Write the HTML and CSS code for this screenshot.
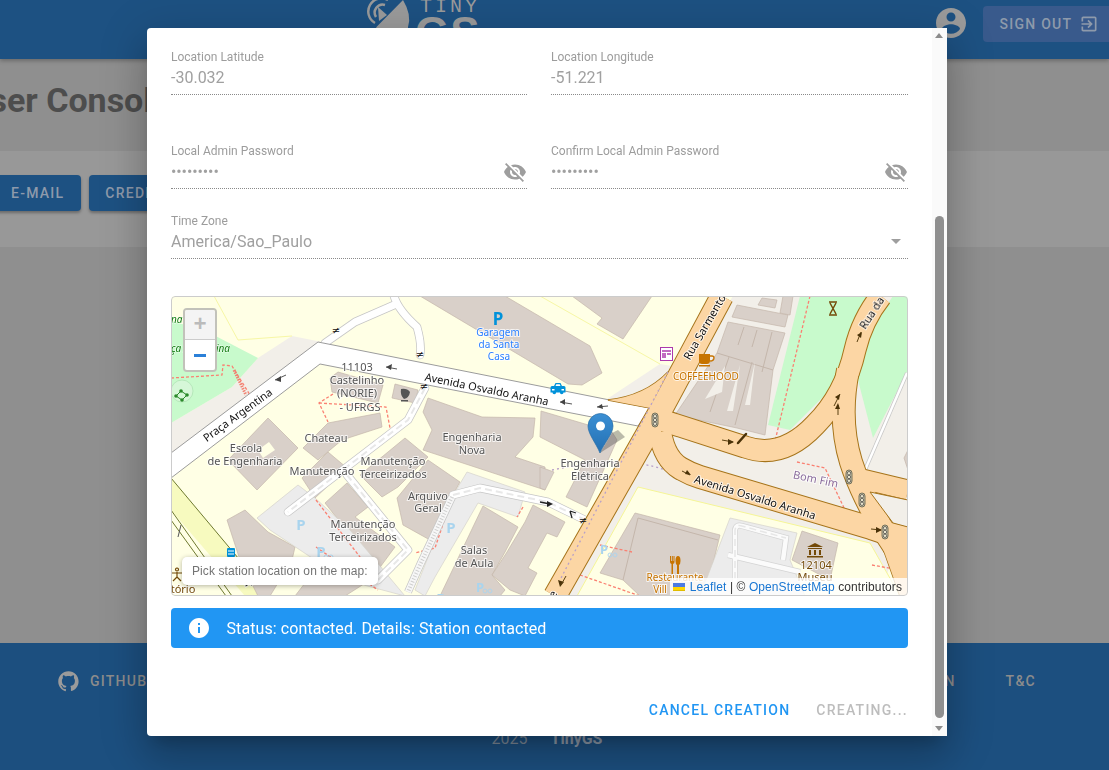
FILE: index.html
```html
<!DOCTYPE html>
<html lang="en">
<head>
<meta charset="utf-8">
<title>TinyGS User Console</title>
<link rel="stylesheet" href="styles.css">
</head>
<body>
<div class="page">
  <header class="topbar">
    <div class="logo">
      <svg class="logo-dish" viewBox="0 0 46 34" width="46" height="34">
        <path class="dish-fill" d="M10.700 28.700 L37 2 Q46 17 42 29 L42 34 L8 34 Z"/>
        <path class="dish-fill" d="M12 9 L21 17 L13 23 Z"/>
        <path class="dish-arc" d="M9 25 A13 13 0 0 1 22 2"/>
        <path class="dish-arc" d="M10 19 A8 8 0 0 1 19 7"/>
      </svg>
      <div class="logo-text">
        <span class="logo-tiny">TINY</span>
        <span class="logo-gs">GS</span>
      </div>
    </div>
    <svg class="account" viewBox="0 0 24 24" width="36" height="36"><path d="M12 2C6.48 2 2 6.48 2 12s4.48 10 10 10 10-4.48 10-10S17.52 2 12 2zm0 3c1.66 0 3 1.34 3 3s-1.34 3-3 3-3-1.34-3-3 1.34-3 3-3zm0 14.2c-2.5 0-4.71-1.28-6-3.22.03-1.99 4-3.08 6-3.08 1.99 0 5.97 1.09 6 3.08-1.29 1.94-3.5 3.22-6 3.22z"/></svg>
    <div class="signout">
      <span>SIGN OUT</span>
      <svg viewBox="0 0 24 24" width="20" height="20"><path d="M10.09 15.59 11.5 17l5-5-5-5-1.41 1.41L12.67 11H3v2h9.67l-2.58 2.59zM19 3H5c-1.11 0-2 .9-2 2v4h2V5h14v14H5v-4H3v4c0 1.1.89 2 2 2h14c1.1 0 2-.9 2-2V5c0-1.1-.9-2-2-2z"/></svg>
    </div>
  </header>
  <main class="console">
    <h1 class="console-title">User Console</h1>
    <div class="console-strip">
      <div class="console-btn console-btn-first">E-MAIL</div>
      <div class="console-btn">CREDENTIALS</div>
    </div>
  </main>
  <footer class="footer">
    <div class="footer-links">
      <svg class="github" viewBox="0 0 24 24" width="23" height="23"><path d="M12 1.3C6.1 1.3 1.3 6.1 1.3 12c0 4.7 3.1 8.7 7.3 10.1.5.1.7-.2.7-.5v-1.9c-3 .6-3.6-1.4-3.6-1.4-.5-1.2-1.2-1.6-1.2-1.6-1-.7.1-.7.1-.7 1.1.1 1.6 1.1 1.6 1.1 1 1.6 2.5 1.2 3.1.9.1-.7.4-1.2.7-1.4-2.4-.3-4.9-1.2-4.9-5.3 0-1.2.4-2.1 1.1-2.9-.1-.3-.5-1.4.1-2.8 0 0 .9-.3 2.9 1.1.9-.2 1.8-.4 2.7-.4.9 0 1.8.1 2.7.4 2-1.4 2.9-1.1 2.9-1.1.6 1.5.2 2.5.1 2.8.7.7 1.1 1.7 1.1 2.9 0 4.1-2.5 5-4.9 5.3.4.3.7 1 .7 2v2.9c0 .3.2.6.7.5 4.2-1.4 7.3-5.4 7.3-10.1C22.7 6.1 17.9 1.3 12 1.3z"/></svg>
      <span class="footer-link">GITHUB</span>
      <span class="footer-link footer-link-push">DOCUMENTATION</span>
      <span class="footer-link footer-link-last">T&amp;C</span>
    </div>
    <div class="footer-copy"><span>2025</span><b>TinyGS</b></div>
  </footer>
</div>

<section class="dialog">
  <div class="dialog-body">
    <div class="grid-2 row-a">
      <div class="field"><div class="field-label">Location Latitude</div><div class="field-value">-30.032</div></div>
      <div class="field"><div class="field-label">Location Longitude</div><div class="field-value">-51.221</div></div>
    </div>
    <div class="grid-2 row-b">
      <div class="field">
        <div class="field-label">Local Admin Password</div>
        <div class="field-value field-pass">•••••••••<svg class="eye" viewBox="0 0 24 24" width="24" height="24"><path d="M12 7c2.76 0 5 2.24 5 5 0 .65-.13 1.26-.36 1.83l2.92 2.92c1.51-1.26 2.7-2.89 3.43-4.75-1.73-4.39-6-7.5-11-7.5-1.4 0-2.74.25-3.98.7l2.16 2.16C10.74 7.13 11.35 7 12 7zM2 4.27l2.28 2.28.46.46C3.08 8.3 1.78 10.02 1 12c1.73 4.39 6 7.5 11 7.5 1.55 0 3.03-.3 4.38-.84l.42.42L19.73 22 21 20.73 3.27 3 2 4.27zM7.53 9.8l1.55 1.55c-.05.21-.08.43-.08.65 0 1.66 1.34 3 3 3 .22 0 .44-.03.65-.08l1.55 1.55c-.67.33-1.41.53-2.2.53-2.76 0-5-2.24-5-5 0-.79.2-1.53.53-2.2zm4.31-.78l3.15 3.15.02-.16c0-1.66-1.34-3-3-3l-.17.01z"/></svg></div>
      </div>
      <div class="field">
        <div class="field-label">Confirm Local Admin Password</div>
        <div class="field-value field-pass">•••••••••<svg class="eye" viewBox="0 0 24 24" width="24" height="24"><path d="M12 7c2.76 0 5 2.24 5 5 0 .65-.13 1.26-.36 1.83l2.92 2.92c1.51-1.26 2.7-2.89 3.43-4.75-1.73-4.39-6-7.5-11-7.5-1.4 0-2.74.25-3.98.7l2.16 2.16C10.74 7.13 11.35 7 12 7zM2 4.27l2.28 2.28.46.46C3.08 8.3 1.78 10.02 1 12c1.73 4.39 6 7.5 11 7.5 1.55 0 3.03-.3 4.38-.84l.42.42L19.73 22 21 20.73 3.27 3 2 4.27zM7.53 9.8l1.55 1.55c-.05.21-.08.43-.08.65 0 1.66 1.34 3 3 3 .22 0 .44-.03.65-.08l1.55 1.55c-.67.33-1.41.53-2.2.53-2.76 0-5-2.24-5-5 0-.79.2-1.53.53-2.2zm4.31-.78l3.15 3.15.02-.16c0-1.66-1.34-3-3-3l-.17.01z"/></svg></div>
      </div>
    </div>
    <div class="field row-c">
      <div class="field-label">Time Zone</div>
      <div class="field-value field-select">America/Sao_Paulo<svg class="caret" viewBox="0 0 24 24" width="24" height="24"><path d="M7 10l5 5 5-5z"/></svg></div>
    </div>

    <div class="map">
      <svg class="map-canvas" viewBox="171 296 737 300" width="737" height="300" preserveAspectRatio="none">
        <defs>
          <linearGradient id="pinGrad" x1="0" y1="0" x2="0" y2="1"><stop offset="0" stop-color="#3b8fd4"/><stop offset="1" stop-color="#2470b2"/></linearGradient>
          <g id="tl"><rect class="tl-box" x="-3" y="-7" width="6" height="14" rx="3"/><circle class="tl-dot" cy="-3.800" r="1.700"/><circle class="tl-dot" r="1.700"/><circle class="tl-dot" cy="3.800" r="1.700"/></g>
        </defs>
        <rect class="m-uni" x="171" y="296" width="737" height="300"/>

        <!-- land -->
        <polygon class="m-land" points="171,423 232,387 258,358 292,336 322,342 171,458"/>
        <polygon class="m-land" points="733,296 908,296 908,510 880,596 560,596 640,440 660,410"/>
        <polygon class="m-land" points="607,399 660,364 672,366 652,402"/>
        <polyline class="m-uniline" points="214,296 238,340 292,336"/>
        <polyline class="m-uniline" points="540,296 660,364"/>
        <polygon class="m-green" points="171,321 204,330 258,358 232,387 171,423"/>
        <circle class="m-greenc" cx="182" cy="391" r="11"/>
        <polygon class="m-green" points="800,296 868,296 833,387 790,430 768,425"/>
        <polygon class="m-green" points="893,296 908,296 908,370 873,438 852,357"/>
        <polygon class="m-uni m-border" points="638,487 870,543 900,596 577,596"/>
        <polygon class="m-strip" points="171,478 270,596 245,596 171,510"/>
        <path class="m-rail" d="M171 478 L270 596 M171 510 L232 596 M171 520 L226 596"/>

        <!-- buildings -->
        <g class="m-bld">
          <polygon points="420,296 505,296 590,346 602,373 582,385 568,384"/>
          <polygon points="572,296 652,296 623,339 597,324 602,318"/>
          <polygon points="330,378 338,372 383,385 378,403 332,392"/>
          <polygon points="328,423 380,413 382,427 342,440 318,460 303,448"/>
          <polygon points="395,384 418,390 415,403 392,398"/>
          <polygon points="268,418 298,448 257,490 228,460"/>
          <polygon points="302,478 328,452 347,468 315,498"/>
          <polygon points="405,438 428,457 398,487 382,497 360,475"/>
          <polygon points="428,460 460,482 450,500 430,540 403,525 397,498"/>
          <polygon points="347,483 368,507 355,517 395,547 378,570 325,503"/>
          <polygon points="423,412 428,398 482,417 535,418 533,437 515,457 545,467 545,490 423,450 432,430"/>
          <polygon points="541,411 612,432 617,440 587,507 566,497 585,460 540,437"/>
          <polygon points="540,467 554,472 545,490 540,488"/>
          <polygon points="483,506 518,527 505,552 492,575 505,590 500,596 440,596"/>
          <polygon points="533,505 565,522 557,537 547,533 528,568 537,573 525,596 510,590 492,575 507,552 525,522"/>
          <polygon points="227,520 245,510 268,532 295,547 292,560 270,596 258,596 240,560"/>
          <polygon points="325,557 362,550 378,575 345,596 295,596"/>
          <polygon points="635,513 720,535 705,596 640,596 623,580 600,573"/>
          <polygon points="802,531 838,543 830,580 792,560"/>
          <polygon points="728,322 785,333 773,370 765,435 737,428 675,415 717,353"/>
          <polygon points="732,317 737,305 788,315 785,327"/>
          <polygon points="758,305 762,298 777,300 775,308"/>
          <polygon points="780,313 783,296 793,296 790,315"/>
          <polygon points="904,458 908,450 908,470"/>
        </g>
        <polygon class="m-uni" points="269,442 275,450 263,458 258,450"/>
        <path class="m-bldline" d="M638 518 L718 540 M638 518 L623 580 M744 327 L738 345 M757 330 L752 347 M772 332 L762 372 M717 353 L773 370 M729 357 L710 412 M752 362 L735 425"/>
        <polygon class="m-land" points="705,399 725,366 722,392"/>
        <polygon class="m-land" points="727,411 740,365 733,411"/>
        <polygon class="m-land" points="745,405 755,362 750,405"/>

        <!-- parking surfaces -->
        <g class="m-park">
          <polygon points="257,518 298,485 315,498 350,530 375,560 405,596 345,580 270,530"/>
          <polygon points="467,472 525,492 518,517 478,503 435,577 425,596 415,590 452,497"/>
          <polygon points="730,518 797,533 790,560 805,596 700,596"/>
        </g>
        <path class="m-lot-case" d="M735 590 L735 530 Q736 524 742 526 L786 538 L783 560 M728 555 L800 572"/>
        <path class="m-lot" d="M735 590 L735 530 Q736 524 742 526 L786 538 L783 560 M728 555 L800 572"/>
        <path class="m-lot-dash" d="M735 590 L735 530 Q736 524 742 526 L786 538"/>

        <!-- footways -->
        <path class="m-foot" d="M171 378 L222 375 L223 365 L232 366 L250 395"/>
        <path class="m-foot-strong" d="M234 370 L246 395"/>
        <path class="m-foot" d="M333 394 L319 403 L328 422 M319 403 L386 407 L390 428 M316 547 L378 590 M316 500 L370 570 M452 497 L435 548 L415 553 M523 507 L517 517 M600 545 L632 552 M580 575 L640 596 M810 296 L775 441 M797 462 L825 468 L845 510 M872 565 L900 570"/>
        <path class="m-foot-p" d="M552 470 Q625 455 665 470 L908 530 M660 465 L760 490"/>

        <!-- service roads -->
        <path class="m-case m-s" d="M394 296 Q398 310 417 327 Q422 345 420 355 M325 343 L355 322 L394 305 M425 388 L408 420 L288 512 M347 475 L408 550 L378 580 M453 495 L480 488 L548 502 L585 520"/>
        <path class="m-white m-s2" d="M394 296 Q398 310 417 327 Q422 345 420 355 M325 343 L355 322 L394 305 M425 388 L408 420 L288 512 M347 475 L408 550 L378 580 M453 495 L480 488 L548 502 L585 520"/>
        <path class="m-dash" d="M425 388 L408 420 L288 512 M347 475 L408 550 L378 580 M453 495 L480 488 L548 502 L585 520"/>
        <path class="m-case m-footway" d="M452 497 L420 565 L408 592"/>
        <path class="m-footway-w" d="M452 497 L420 565 L408 592"/>
        <path class="m-footway-d" d="M452 497 L420 565 L408 592"/>
        <path class="m-white-case" d="M907 373 L865 470"/>
        <path class="m-white-thin" d="M907 373 L865 470"/>

        <!-- white avenue -->
        <polygon class="m-ave" points="171,453 318,342 650,408 638,426 320,364 171,478"/>

        <!-- primary roads casing then fill -->
        <g class="m-road-case">
          <path class="w23" d="M722 296 L662 408 L555 596"/>
          <path class="w22" d="M655 418 L745 447 Q782 460 815 425 Q845 395 855 350 Q862 320 881 296"/>
          <path class="w23" d="M848 370 Q838 420 851 462 Q860 490 880 525 L895 548"/>
          <path class="w20" d="M858 478 L908 490"/>
          <path class="w23" d="M660 432 Q664 458 680 468 Q690 474 700 477 L871 528 L895 536"/>
          <path class="m-wedge" d="M608 400 Q645 396 668 372 L650 408 Z"/>
          <path class="m-wedge" d="M893 523 L908 527 L908 596 L900 596 L880 540 Z"/>
        </g>
        <g class="m-road">
          <path class="w23" d="M722 296 L662 408 L555 596"/>
          <path class="w22" d="M655 418 L745 447 Q782 460 815 425 Q845 395 855 350 Q862 320 881 296"/>
          <path class="w23" d="M848 370 Q838 420 851 462 Q860 490 880 525 L895 548"/>
          <path class="w20" d="M858 478 L908 490"/>
          <path class="w23" d="M660 432 Q664 458 680 468 Q690 474 700 477 L871 528 L895 536"/>
          <path class="m-wedge-f" d="M608 400 Q645 396 668 372 L650 408 Z"/>
          <path class="m-wedge-f" d="M893 523 L908 527 L908 596 L900 596 L880 540 Z"/>
        </g>
        <polygon class="m-tri" points="870,492 893,523 908,527 908,500"/>
        <path class="m-foot-p" d="M668 372 L560 580"/>

        <!-- one-way arrows -->
        <g class="m-arrow">
          <path d="M275 380 L286 375"/><path d="M386 367 L397 369"/><path d="M560 402 L572 404"/>
          <path d="M597 407 L608 406"/><path d="M181 525 L178 537"/>
        </g>
        <g class="m-arrow-head">
          <path d="M275 380 l6 -4 l0 6z"/><path d="M386 367 l6 -3 l-1 6z"/><path d="M560 402 l5 -3 l0 6z"/>
          <path d="M597 407 l5 -3 l1 5z"/>
        </g>
        <g class="m-oneway-b">
          <path class="m-a2" d="M722 440 L733 442"/><path class="m-h2" d="M734 442 l-6 -3 l0 6z"/>
          <path class="m-a2" d="M834 406 L840 394"/><path class="m-h2" d="M840 394 l-5 3 l4 3z"/>
          <path class="m-a2" d="M838 415 L838 405"/><path class="m-h2" d="M838 403 l-3 6 l5 0z"/>
          <path class="m-a2" d="M857 342 L861 332"/><path class="m-h2" d="M862 332 l-5 3 l4 3z"/>
          <path class="m-a2" d="M682 471 L690 475"/><path class="m-h2" d="M691 475 l-6 -1 l2 -4z"/>
          <path class="m-a2" d="M871 529 L881 530"/><path class="m-h2" d="M882 530 l-6 -3 l0 6z"/>
          <path class="m-h2" d="M560 587 l-2 -7 l6 2z"/><path class="m-a2" d="M561 585 L566 576"/>
          <path class="m-a3" d="M738 443 L746 434"/>
        </g>
        <path class="m-black-thin" d="M540 502 L550 504 M570 511 L572 518 M570 511 L576 513"/>
        <path class="m-h3" d="M553 504 l-6 -3 l0 6z"/>
        <g class="m-ne">
          <text x="336" y="334">≠</text><text x="420" y="358">≠</text><text x="424" y="390">≠</text><text x="583" y="524">≠</text>
        </g>

        <!-- traffic lights -->
        <use href="#tl" x="655" y="420"/>
        <use href="#tl" x="849" y="477"/>
        <use href="#tl" x="862" y="500"/>
        <use href="#tl" x="885" y="532"/>

        <!-- point icons -->
        <path class="m-hour" d="M829 302 h8 M829 315 h8 M830 303 L836 314 M836 303 L830 314"/>
        <g class="m-news"><rect x="660.500" y="347.500" width="12" height="13"/><path d="M662 350 h9 v2 h-9z M662 353 h4 v5 h-4z M667 353 h4 v2 h-4z"/></g>
        <path class="m-cafe-f" d="M699 354 h11 v7 q0 3 -3 3 h-5 q-3 0 -3 -3z M699 365 h11 v1.500 h-11z"/>
        <path class="m-cafe-s" d="M710 356 h2 q2 0 2 2 q0 3 -4 3"/>
        <path class="m-taxi" d="M554 386 l1.500 -3 h5 l1.500 3 h2 q1.500 0 1.500 1.500 v5 h-2 a1.800 1.800 0 0 1 -3.600 0 h-3.800 a1.800 1.800 0 0 1 -3.600 0 h-2 v-5 q0 -1.500 1.500 -1.500z"/>
        <path class="m-taxi-w" d="M555.500 386 l.8 -1.800 h3.400 l.8 1.800z M552 389 h2.500 v1.500 h-2.500z M561.500 389 h2.500 v1.500 h-2.500z"/>
        <path class="m-rest" d="M670 556 v6 q0 1.500 1.500 2 v10 h1.500 v-10 q1.500 -.5 1.500 -2 v-6 h-1 v5 h-.7 v-5 h-1 v5 h-.8 v-5z M677 574 v-9 q-1.500 -1 -1.500 -4 q0 -5 2.500 -5 q2.500 0 2.500 5 q0 3 -1.500 4 v9z"/>
        <path class="m-museum" d="M815 543 L823 547 L807 547 Z M808 548 h14 v1 h-14z M809 550 h2 v5 h-2z M814 550 h2 v5 h-2z M819 550 h2 v5 h-2z M807 556 h16 v1.500 h-16z"/>
        <path class="m-dishico" d="M401 389 q6 -1 9 3 q-1 6 -6 7 q-4 -4 -3 -10z M401 400 h7 v1.500 h-7z"/>
        <g class="m-tree"><circle cx="176" cy="396" r="1.800"/><circle cx="181" cy="391" r="1.800"/><circle cx="187" cy="395" r="1.800"/><circle cx="182" cy="400" r="1.800"/><path d="M176 396 L181 391 L187 395 L182 400Z" class="m-tree-l"/></g>
        <rect class="m-bus" x="227" y="548" width="8" height="9" rx="1"/>
        <path class="m-bus-l" d="M228 551 h6 M228 554 h6"/>
        <path class="m-peep" d="M177 568 a1.500 1.500 0 1 0 .01 0z M172 573 h10 M177 572 v5 M177 577 l-4 4 M177 577 l4 4"/>
        <g class="m-bike"><circle cx="610" cy="555" r="2"/><circle cx="615" cy="555" r="2"/><circle cx="485" cy="591" r="2"/><circle cx="490" cy="591" r="2"/><circle cx="326" cy="557" r="2"/><circle cx="331" cy="557" r="2"/></g>

        <!-- labels -->
        <g class="m-t">
          <text x="357" y="371">11103</text><text x="357" y="384">Castelinho</text><text x="357" y="397">(NORIE)</text><text x="360" y="411">- UFRGS</text>
          <text x="326" y="442">Chateau</text><text x="246" y="452">Escola</text><text x="245" y="465">de Engenharia</text>
          <text x="322" y="475">Manutenção</text><text x="393" y="465">Manutenção</text><text x="393" y="478">Terceirizados</text>
          <text x="472" y="441">Engenharia</text><text x="472" y="454">Nova</text><text x="428" y="500">Arquivo</text><text x="428" y="512">Geral</text>
          <text x="363" y="528">Manutenção</text><text x="363" y="541">Terceirizados</text><text x="474" y="554">Salas</text><text x="474" y="567">de Aula</text>
          <text x="590" y="467">Engenharia</text><text x="590" y="480">Elétrica</text>
        </g>
        <g class="m-park-lbl">
          <text x="301" y="530">P</text><text x="451" y="533">P</text><text x="321" y="557">P</text>
          <text x="604" y="554" class="m-park-sm">P</text><text x="480" y="592" class="m-park-sm">P</text><text x="441" y="604">P</text>
        </g>
        <text class="m-parkbig" x="498" y="325">P</text>
        <g class="m-blue"><text x="498" y="336">Garagem</text><text x="499" y="348">da Santa</text><text x="499" y="360">Casa</text></g>
        <text class="m-coffee" x="706" y="380">COFFEEHOOD</text>
        <g class="m-brown"><text x="816" y="569">12104</text><text x="815" y="581">Museu</text><text x="183" y="593">tório</text></g>
        <g class="m-coffee"><text x="675" y="581">Restaurante</text><text x="660" y="593">Vill</text></g>
        <text class="m-purple" transform="translate(815 483) rotate(12)">Bom Fim</text>
        <g class="m-road-t">
          <text transform="translate(486 393) rotate(11.500)">Avenida Osvaldo Aranha</text>
          <text transform="translate(754 501) rotate(17)">Avenida Osvaldo Aranha</text>
          <text transform="translate(240 418) rotate(-36)">Praça Argentina</text>
          <text transform="translate(708 329) rotate(-60)">Rua Sarmento</text>
          <text transform="translate(875 315) rotate(-57)">Rua da</text>
          <text transform="translate(244 584) rotate(55)">dr</text>
          <text transform="translate(556 596) rotate(-60)">e</text>
        </g>
        <g class="m-parkname"><text x="171" y="323">na</text><text x="171" y="352">ça A</text><text x="216" y="352">ina</text></g>

        <!-- marker -->
        <path class="m-shadow" d="M600 453 L612 433 L618 430 L625 437 Z"/>
        <path class="m-pin" d="M600 453 C596 443 588 434 588 426 A12.500 12.500 0 0 1 613 426 C613 434 604 443 600 453 Z"/>
        <circle class="m-pin-dot" cx="600.500" cy="426" r="4.500"/>
      </svg>

      <div class="zoom">
        <div class="zoom-btn zoom-in">+</div>
        <div class="zoom-btn zoom-out"><i></i></div>
      </div>
      <div class="pick">Pick station location on the map:</div>
      <div class="attrib">
        <svg class="flag" viewBox="0 0 12 8" width="12" height="8"><rect width="12" height="4" fill="#4C7BE1"/><rect y="4" width="12" height="3" fill="#FFD500"/><rect y="7" width="12" height="1" fill="#E0BC00"/></svg>
        <a>Leaflet</a> <span class="sep">|</span> © <a>OpenStreetMap</a> contributors
      </div>
    </div>

    <div class="alert">
      <svg viewBox="0 0 24 24" width="24" height="24"><path d="M12 2C6.48 2 2 6.48 2 12s4.48 10 10 10 10-4.48 10-10S17.52 2 12 2zm1 15h-2v-6h2v6zm0-8h-2V7h2v2z"/></svg>
      <span>Status: contacted. Details: Station contacted</span>
    </div>

    <div class="actions">
      <span class="action action-cancel">CANCEL CREATION</span>
      <span class="action action-off">CREATING...</span>
    </div>
  </div>

  <div class="scrollbar">
    <i class="scroll-up"></i>
    <i class="scroll-thumb"></i>
    <i class="scroll-down"></i>
  </div>
</section>
</body>
</html>
```
FILE: styles.css
```css
* { box-sizing: border-box; }
html, body { margin: 0; height: 100%; overflow: hidden; }
body { font-family: Roboto, "Liberation Sans", sans-serif; background: #8f8f8f; }

.page { width: 1109px; height: 770px; display: flex; flex-direction: column; overflow: hidden; }

/* background page, already dimmed as under a modal backdrop */
.topbar { height: 59px; flex: none; background: #1d5182; box-shadow: 0 2px 4px rgba(0,0,0,.25); display: flex; align-items: flex-start; position: relative; overflow: hidden; }
.logo { display: flex; margin-left: 366px; height: 59px; }
.logo-dish { margin-top: -2px; flex: none; }
.dish-fill { fill: #9b9b9b; }
.dish-arc { fill: none; stroke: #9b9b9b; stroke-width: 2.500; }
.logo-text { margin-left: 3px; display: flex; flex-direction: column; }
.logo-tiny { font: 400 20px/1 "Liberation Mono", monospace; color: #9b9b9b; letter-spacing: 3px; margin-top: -3px; margin-left: 5px; }
.logo-gs { font: 700 44px/1 "Liberation Sans", sans-serif; color: #9b9b9b; margin-top: -6px; letter-spacing: 1px; }
.account { fill: #9b9b9b; margin-left: 452px; margin-top: 5px; flex: none; }
.signout { margin-left: 14px; margin-top: 6px; width: 150px; height: 36px; flex: none; background: #395a8c; border-radius: 4px; color: #8e9aab; font-size: 14px; font-weight: 500; letter-spacing: 1.250px; display: flex; align-items: center; padding-left: 17px; gap: 7px; }
.signout svg { fill: #8e9aab; }

.console { flex: 1; background: #8f8f8f; min-height: 0; }
.console-title { margin: 19px 0 0 -33px; font-size: 34px; line-height: 44px; font-weight: 700; color: #4d4d4d; white-space: nowrap; }
.console-strip { margin-top: 29px; height: 96px; background: #989898; display: flex; gap: 8px; padding-top: 24px; }
.console-btn { height: 36px; padding: 0 16px; display: flex; align-items: center; background: #1d5182; border-radius: 4px; color: #8e9aab; font-size: 14px; font-weight: 500; letter-spacing: 1.250px; box-shadow: 0 2px 3px rgba(0,0,0,.3); }
.console-btn-first { margin-left: -6px; padding-left: 17px; padding-right: 17px; }

.footer { height: 127px; flex: none; background: #1c4f7f; }
.footer-links { display: flex; align-items: center; height: 24px; margin-top: 26px; padding-left: 57px; font-size: 14px; font-weight: 500; letter-spacing: 1.250px; }
.github { fill: #9b9b9b; flex: none; }
.footer-link { margin-left: 10px; color: #8c8c8c; }
.footer-link-push { margin-left: auto; }
.footer-link-last { margin-left: 50px; margin-right: 73px; }
.footer-copy { margin-top: 34px; margin-left: -15px; display: flex; justify-content: center; gap: 23px; font-size: 16px; line-height: 24px; color: #7d8a99; }
.footer-copy b { color: #8c98a8; }

/* dialog */
.dialog { position: fixed; left: 147px; top: 28px; width: 800px; height: 708px; background: #fff; border-radius: 4px 0 0 4px; box-shadow: 0 11px 15px -7px rgba(0,0,0,.2), 0 24px 38px 3px rgba(0,0,0,.14), 0 9px 46px 8px rgba(0,0,0,.12); overflow: hidden; }
.dialog-body { padding: 19px 39px 8px 24px; height: 100%; display: flex; flex-direction: column; }

.grid-2 { display: grid; grid-template-columns: 356px 357px; column-gap: 24px; }
.row-b { margin-top: 46px; }
.row-c { margin-top: 22px; }

.field { height: 48px; padding-top: 2px; }
.field-label { font-size: 12px; line-height: 16px; color: #9c9c9c; }
.field-value { height: 30px; padding-top: 1px; line-height: 24px; font-size: 16px; color: #a0a0a0; border-bottom: 1px dotted #8a8a8a; display: flex; justify-content: space-between; }
.field-pass { letter-spacing: -.1px; }
.eye { fill: #9e9e9e; position: relative; top: 0; }
.caret { fill: #9e9e9e; position: relative; top: -1px; }

.map { margin-top: 37px; height: 300px; width: 737px; position: relative; border-radius: 4px; overflow: hidden; flex: none; }
.map::after { content: ""; position: absolute; inset: 0; border: 1px solid #ccc; border-radius: 4px; pointer-events: none; }
.map-canvas { display: block; }

.zoom { position: absolute; left: 12px; top: 12px; width: 34px; border: 2px solid #c2c2ba; border-radius: 4px; overflow: hidden; }
.zoom-btn { height: 30px; width: 30px; display: flex; align-items: center; justify-content: center; font: 700 22px/30px "Liberation Mono", monospace; }
.zoom-in { background: #f4f4f4; color: #bbb; border-bottom: 1px solid #ccc; padding-top: 3px; }
.zoom-out { background: #fff; }
.zoom-out i { display: block; width: 12px; height: 3px; background: #2b80d8; }

.pick { position: absolute; left: 11px; bottom: 11px; height: 28px; width: 196px; padding-left: 10px; background: #fff; border-radius: 5px; font: 12px/28px "Liberation Sans", sans-serif; letter-spacing: .09px; color: #737373; box-shadow: 0 1px 5px rgba(0,0,0,.3); white-space: nowrap; }
.attrib { position: absolute; right: 0; bottom: 0; height: 18px; padding: 0 6px 0 3px; background: rgba(255,255,255,.8); font: 12px/18px "Liberation Sans", sans-serif; letter-spacing: .09px; color: #333; white-space: nowrap; }
.attrib a { color: #1976d2; }
.flag { vertical-align: baseline; margin-right: 1px; }

.alert { margin-top: 12px; height: 40px; flex: none; background: #2196f3; color: #fff; border-radius: 4px; display: flex; align-items: center; padding-left: 16px; gap: 15.500px; font-size: 16px; letter-spacing: .09px; }
.alert svg { fill: #fff; flex: none; }

.actions { margin-top: 44px; height: 36px; flex: none; display: flex; justify-content: flex-end; align-items: center; gap: 26px; font-size: 14px; font-weight: 500; letter-spacing: 1.250px; }
.action-cancel { color: #2196f3; }
.action-off { color: #bdbdbd; }

.scrollbar { position: absolute; right: 0; top: 0; bottom: 0; width: 15px; background: #fafafa; }
.scrollbar i { display: block; position: absolute; }
.scroll-up { left: 3px; top: 5px; width: 0; height: 0; border: 4.500px solid transparent; border-top: 0; border-bottom: 5px solid #8c8c8c; }
.scroll-down { left: 3px; bottom: 5px; width: 0; height: 0; border: 4.500px solid transparent; border-bottom: 0; border-top: 5px solid #8c8c8c; }
.scroll-thumb { left: 3px; top: 188px; width: 9px; height: 502px; border-radius: 4.500px; background: #8f8f8f; }

/* map canvas */
.m-uni { fill: #ffffe5; }
.m-border { stroke: #f5f596; stroke-width: 1; }
.m-land, .m-tri { fill: #f2efe9; }
.m-tri { stroke: #a6741a; stroke-width: 1; }
.m-uniline { fill: none; stroke: #f7f7a5; stroke-width: 1; }
.m-green { fill: #c8facc; }
.m-greenc { fill: #d6f7d8; stroke: #b6e8ba; stroke-width: 1; }
.m-strip { fill: #f7fabf; }
.m-rail { fill: none; stroke: #6f7a30; stroke-width: 1; }
.m-bld polygon { fill: #d9d0c9; stroke: #c4b6ab; stroke-width: .7; }
.m-bldline { fill: none; stroke: #c4b6ab; stroke-width: 1; }
.m-park polygon { fill: #ececec; stroke: #d6d2cc; stroke-width: .7; }
.m-foot { fill: none; stroke: #fa8072; stroke-width: 1.300; stroke-dasharray: 3 2; }
.m-foot-strong { fill: none; stroke: #f08070; stroke-width: 3; stroke-dasharray: 1.500 1; }
.m-foot-p { fill: none; stroke: #b8a0c8; stroke-width: 1.300; stroke-dasharray: 2 3; }
.m-case { fill: none; stroke: #c6c6c6; stroke-linecap: round; stroke-linejoin: round; }
.m-s { stroke-width: 8.500; }
.m-white { fill: none; stroke: #fff; stroke-linecap: round; stroke-linejoin: round; }
.m-s2 { stroke-width: 7; }
.m-lot-case { fill: none; stroke: #d4d4d4; stroke-width: 6; }
.m-lot { fill: none; stroke: #fbfbfb; stroke-width: 4.500; }
.m-lot-dash { fill: none; stroke: #e6e6e6; stroke-width: 1.500; stroke-dasharray: 7 4; }
.m-dash { fill: none; stroke: #e8e8e8; stroke-width: 2; stroke-dasharray: 7 4; }
.m-footway { stroke-width: 8; stroke-linecap: butt; }
.m-footway-w { fill: none; stroke: #f7f7f7; stroke-width: 6.500; stroke-linecap: butt; }
.m-footway-d { fill: none; stroke: #cfcfcf; stroke-width: 4; stroke-dasharray: 1 2; }
.m-white-case { fill: none; stroke: #c6c6c6; stroke-width: 4; }
.m-white-thin { fill: none; stroke: #fff; stroke-width: 2.500; }
.m-ave { fill: #fff; stroke: #9c9c9c; stroke-width: 1; }
.m-road-case path { fill: none; stroke: #a6741a; }
.m-road path { fill: none; stroke: #fcd6a4; }
.m-road-case .w23 { stroke-width: 24; }
.m-road .w23 { stroke-width: 22; }
.m-road-case .w22 { stroke-width: 23; }
.m-road .w22 { stroke-width: 21; }
.m-road-case .w20 { stroke-width: 21; }
.m-road .w20 { stroke-width: 19; }
.m-road-case .m-wedge { fill: #a6741a; stroke-width: 1.500; }
.m-road .m-wedge-f { fill: #fcd6a4; stroke: none; }
.m-arrow path { fill: none; stroke: #555; stroke-width: 1; }
.m-a2 { fill: none; stroke: #5a4010; stroke-width: 1; }
.m-a3 { fill: none; stroke: #4a3208; stroke-width: 2.500; stroke-linecap: round; }
.m-arrow-head path { fill: #444; }
.m-h2 { fill: #4a3208; }
.m-h3 { fill: #222; }
.m-black-thin { fill: none; stroke: #222; stroke-width: 1.300; }
.m-ne text { font: 10px "DejaVu Sans", sans-serif; fill: #111; text-anchor: middle; }
.tl-box { fill: #c9c3a6; stroke: #5c5c4a; stroke-width: .8; }
.tl-dot { fill: #e8e4cc; stroke: #444; stroke-width: .7; }
.m-hour { fill: none; stroke: #734a08; stroke-width: 1.500; }
.m-news rect { fill: #fff; stroke: #ac39ac; stroke-width: 1; }
.m-news path { fill: #ac39ac; opacity: .75; }
.m-cafe-f { fill: #c77400; }
.m-cafe-s { fill: none; stroke: #c77400; stroke-width: 1.300; }
.m-taxi { fill: #0092da; }
.m-taxi-w { fill: #fff; }
.m-rest { fill: #c77400; }
.m-museum { fill: #734a08; }
.m-dishico { fill: #555; }
.m-tree circle { fill: #2a8a2a; }
.m-tree-l { fill: none; stroke: #2a8a2a; stroke-width: 1; }
.m-bus { fill: #0092da; }
.m-bus-l { fill: none; stroke: #fff; stroke-width: 1; }
.m-peep { fill: none; stroke: #734a08; stroke-width: 1.200; }
.m-bike circle { fill: none; stroke: #a9d4ee; stroke-width: .9; }

.m-t text, .m-blue text, .m-brown text, .m-coffee, .m-coffee text, .m-purple, .m-road-t text, .m-parkname text { font-family: "Noto Sans", "DejaVu Sans", sans-serif; font-size: 11px; text-anchor: middle; paint-order: stroke; stroke: rgba(255,255,255,.75); stroke-width: 2px; }
.m-t text { fill: #555; }
.m-blue text { fill: #2b80ff; font-size: 10px; }
.m-brown text { fill: #734a08; }
.m-coffee, .m-coffee text { fill: #c77400; font-size: 10px; }
.m-purple { fill: #8a6d9c; }
.m-road-t text { fill: #111; }
.m-parkname text { fill: #0c7a0c; font-style: italic; text-anchor: start; font-size: 10px; stroke-width: 1px; }
.m-park-lbl text { font: 700 15px "Noto Sans", sans-serif; fill: #a9d4ee; text-anchor: middle; }
.m-park-lbl .m-park-sm { font-size: 13px; }
.m-parkbig { font: 700 17px "Noto Sans", sans-serif; fill: #0092da; text-anchor: middle; }

.m-shadow { fill: rgba(60,60,60,.35); }
.m-pin { fill: url(#pinGrad); stroke: #2a6fa8; stroke-width: .7; }
.m-pin-dot { fill: #fff; }
```
